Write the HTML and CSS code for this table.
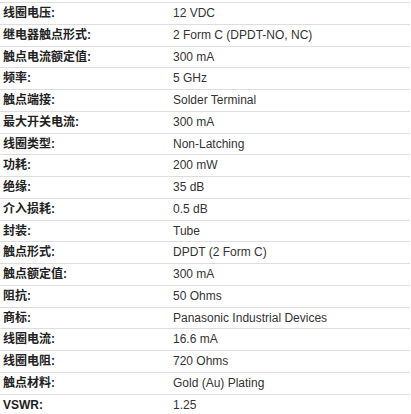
FILE: index.html
```html
<!DOCTYPE html>
<html lang="zh">
<head>
<meta charset="utf-8">
<link rel="stylesheet" href="styles.css">
</head>
<body>
<div class="wrap">
<table class="specs">
<tbody>
<tr><th>线圈电压:</th><td>12 VDC</td></tr>
<tr><th>继电器触点形式:</th><td>2 Form C (DPDT-NO, NC)</td></tr>
<tr><th>触点电流额定值:</th><td>300 mA</td></tr>
<tr><th>频率:</th><td>5 GHz</td></tr>
<tr><th>触点端接:</th><td>Solder Terminal</td></tr>
<tr><th>最大开关电流:</th><td>300 mA</td></tr>
<tr><th>线圈类型:</th><td>Non-Latching</td></tr>
<tr><th>功耗:</th><td>200 mW</td></tr>
<tr><th>绝缘:</th><td>35 dB</td></tr>
<tr><th>介入损耗:</th><td>0.5 dB</td></tr>
<tr><th>封装:</th><td>Tube</td></tr>
<tr><th>触点形式:</th><td>DPDT (2 Form C)</td></tr>
<tr><th>触点额定值:</th><td>300 mA</td></tr>
<tr><th>阻抗:</th><td>50 Ohms</td></tr>
<tr><th>商标:</th><td>Panasonic Industrial Devices</td></tr>
<tr><th>线圈电流:</th><td>16.6 mA</td></tr>
<tr><th>线圈电阻:</th><td>720 Ohms</td></tr>
<tr><th>触点材料:</th><td>Gold (Au) Plating</td></tr>
<tr><th>VSWR:</th><td>1.25</td></tr>
</tbody>
</table>
</div>
</body>
</html>
```

FILE: styles.css
```css
html, body {
  margin: 0;
  padding: 0;
  background: #fff;
}
.wrap {
  padding-top: 2px;
}
.specs {
  width: 410px;
  border-collapse: collapse;
  font-family: "Liberation Sans", Arial, "Noto Sans CJK SC", sans-serif;
  font-size: 12px;
  color: #333;
}
.specs th,
.specs td {
  border-top: 1px solid #ddd;
  padding: 2px 3px;
  line-height: 16.75px;
  text-align: left;
  vertical-align: middle;
}
.specs th {
  width: 164px;
  font-weight: bold;
  color: #222;
}
```
